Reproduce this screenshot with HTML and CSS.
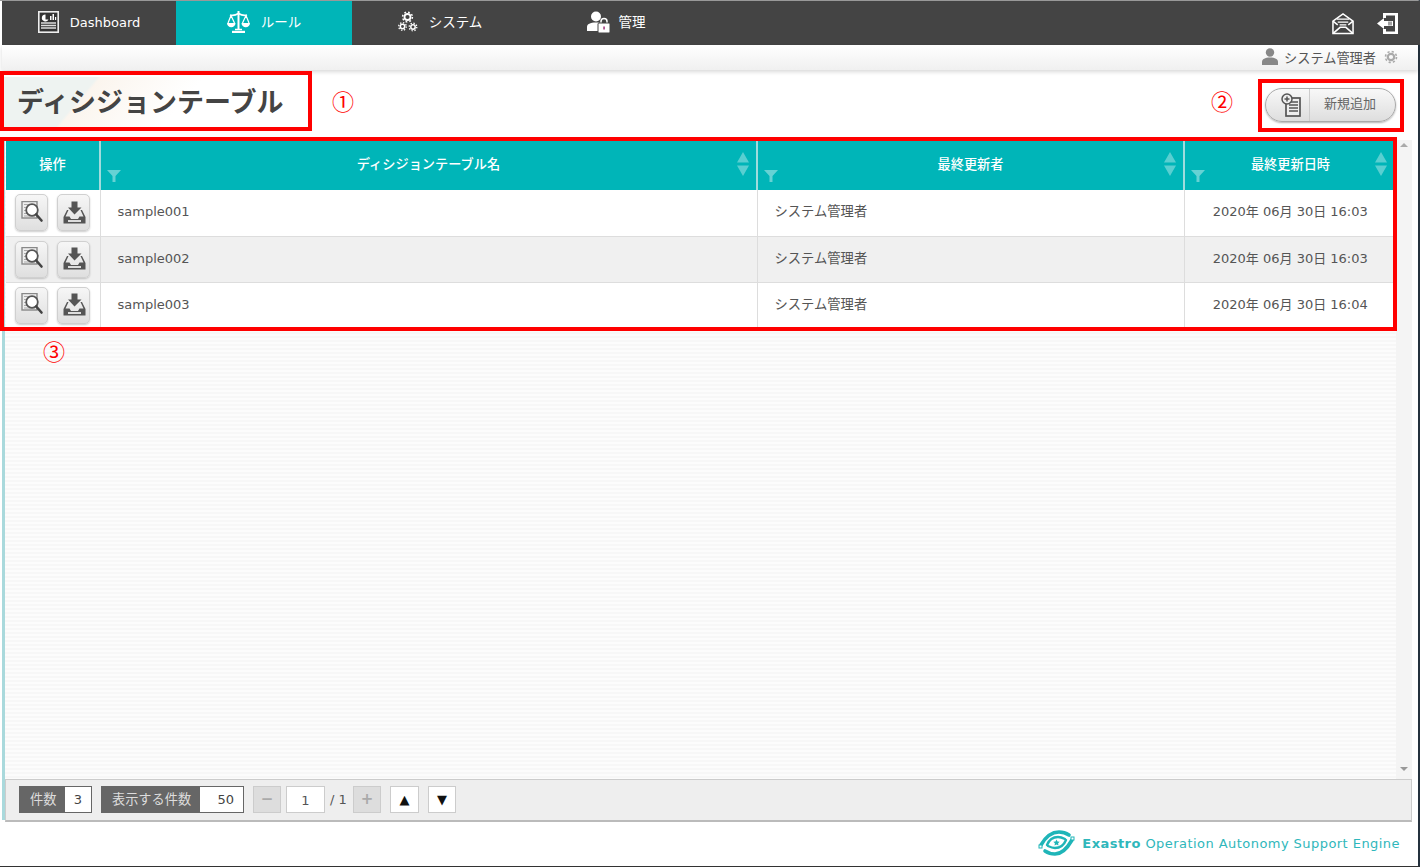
FILE: index.html
```html
<!DOCTYPE html>
<html lang="ja">
<head>
    <meta charset="UTF-8">
    <title>ディシジョンテーブル</title>
    <link rel="stylesheet" href="styles.css">
</head>
<body>

<svg class="defs" width="0" height="0">
    <symbol id="i-search" viewBox="0 0 24 24">
        <rect x="2" y="0.500" width="15" height="16.500" fill="#eee" stroke="#888" stroke-width="1.400"/>
        <path d="M4 3.500h11M4 6.500h3M4 9.500h2M4 12.500h3M4 15h11" stroke="#aaa" stroke-width="1"/>
        <circle cx="12" cy="9" r="5.800" fill="#fff" stroke="#555" stroke-width="1.800"/>
        <path d="M16.200 13.500l5.300 6" stroke="#444" stroke-width="2.600" stroke-linecap="round"/>
    </symbol>
    <symbol id="i-download" viewBox="0 -2 24 24">
        <path d="M9.500-1.500h6v6h4L12.500 11.500 6 4.500h3.500z" fill="#555"/>
        <path d="M5 7L1.500 14v6.500h22V14L20 7h-1.500l3 6.500h-4L16 16H9l-1.500-2.500h-4l3-6.500z" fill="#555"/>
        <rect x="6" y="17" width="13" height="2" fill="#ddd"/>
    </symbol>
    <symbol id="i-filter" viewBox="0 0 14 12">
        <path d="M0 0h14L8.500 6v6h-3V6z"/>
    </symbol>
    <symbol id="i-sort" viewBox="0 0 12 24">
        <path d="M6 0l6 10.500H0zM0 13.500h12L6 24z"/>
    </symbol>
</svg>

<div class="page">
    <nav class="nav">
        <a class="tab tab-first">
            <svg class="tab-icon" width="21" height="22" viewBox="0 0 21 22">
                <rect x="0.800" y="0.800" width="19.400" height="20.400" fill="#333" stroke="#eee" stroke-width="1.600"/>
                <path d="M7.500 3.500a3.500 3.500 0 1 0 3 5h-3z" fill="#fff"/>
                <path d="M12 9V5h1.500v4zM14.500 9V3H16v6zM17 9V6h1.200v3z" fill="#fff"/>
                <path d="M3 12h15M3 14.500h15M3 17h15" stroke="#ddd" stroke-width="1.300"/>
            </svg>
            Dashboard
        </a>
        <a class="tab tab-ja tab-active">
            <svg class="tab-icon" width="23" height="22" viewBox="0 0 23 22" fill="none" stroke="#fff">
                <path d="M11.500 0v18" stroke-width="2"/>
                <path d="M3 4c3 1 6 0 8.500-1.500C14 4 17 5 20 4" stroke-width="1.600"/>
                <path d="M5 21h13" stroke-width="2.400"/>
                <path d="M8 18.500h7" stroke-width="1.500"/>
                <path d="M4 4.500L1 12M4 4.500L7.500 12M19 4.500L15.500 12M19 4.500L22 12" stroke-width="1.200"/>
                <path d="M0 12h8.500a4.250 4.250 0 0 1-8.500 0zM14.500 12H23a4.250 4.250 0 0 1-8.500 0z" fill="#fff" stroke="none"/>
            </svg>
            ルール
        </a>
        <a class="tab tab-ja">
            <svg class="tab-icon" width="20" height="22" viewBox="0 0 20 22" fill="none" stroke="#fff">
                <circle cx="9.500" cy="6" r="3" stroke-width="1.800"/>
                <circle cx="9.500" cy="6" r="4.900" stroke-width="1.500" stroke-dasharray="1.800 2.050"/>
                <circle cx="4.500" cy="15.500" r="2.200" stroke-width="1.500"/>
                <circle cx="4.500" cy="15.500" r="3.800" stroke-width="1.300" stroke-dasharray="1.400 1.580"/>
                <circle cx="15" cy="16" r="2.200" stroke-width="1.500"/>
                <circle cx="15" cy="16" r="3.800" stroke-width="1.300" stroke-dasharray="1.400 1.580"/>
            </svg>
            システム
        </a>
        <a class="tab tab-ja tab-admin">
            <svg class="tab-icon" width="23" height="22" viewBox="0 0 23 22">
                <circle cx="9" cy="5.500" r="5" fill="#fff"/>
                <path d="M0 20v-4c0-3 3-4.500 9-4.500 3 0 5 .4 6 1.500v7z" fill="#fff"/>
                <path d="M14 13v-2.500a3 3 0 0 1 6 0V13" fill="none" stroke="#fff" stroke-width="1.500"/>
                <rect x="11" y="12" width="12" height="10" rx="1" fill="#fff" stroke="#444"/>
                <rect x="16.300" y="15.500" width="1.500" height="3" fill="#a0307a"/>
            </svg>
            管理
        </a>
        <div class="nav-right">
            <svg width="22" height="23" viewBox="0 0 23 23" fill="none" stroke="#fff" stroke-width="1.600">
                <path d="M1 9l10.500-7.500L22 9v13H1z"/>
                <path d="M1 9l5 4M22 9l-5 4M1.500 21.500l7-6h6l7 6"/>
                <path d="M5 7h13M6 10h11M8 13h7" stroke-width="1.300"/>
            </svg>
            <svg width="22" height="23" viewBox="0 0 22 23">
                <path d="M6 6V1h15v21H6v-5h3v2.500h9v-16H9V6z" fill="#fff"/>
                <path d="M0 11.500L7 6v3h9v5H7v3z" fill="#fff"/>
                <path d="M12 9.500v4M14 9.500v4" stroke="#444"/>
            </svg>
        </div>
    </nav>

    <div class="userbar">
        <svg width="16" height="18" viewBox="0 0 16 18" fill="#888">
            <circle cx="8" cy="4.500" r="4.200"/>
            <path d="M0 17v-3c0-3 3-4.500 8-4.500s8 1.500 8 4.500v3z"/>
        </svg>
        <span class="user-name">システム管理者</span>
        <svg width="14" height="14" viewBox="0 0 14 14" fill="none" stroke="#aaa">
            <circle cx="7" cy="7" r="3.200" stroke-width="2.200"/>
            <circle cx="7" cy="7" r="5.500" stroke-width="1.600" stroke-dasharray="2.200 2.120"/>
        </svg>
    </div>

    <div class="titlebar">
        <h1 class="title">ディシジョンテーブル</h1>
        <button class="add-btn" type="button">
            <span class="add-icon">
                <svg width="20" height="24" viewBox="0 0 20 24" fill="none" stroke="#555">
                    <rect x="5" y="5" width="14" height="18" fill="#eee" stroke-width="1.700"/>
                    <path d="M8 9h9M8 12h9M8 15h9M8 18h9" stroke-width="1.700"/>
                    <circle cx="6" cy="6" r="5" fill="#eee" stroke-width="1.500"/>
                    <path d="M6 3.500v5M3.500 6h5" stroke-width="1.500"/>
                </svg>
            </span>
            <span class="add-label">新規追加</span>
        </button>
    </div>

    <div class="content">
        <div class="table-wrap">
            <table class="rule-table">
                <thead>
                    <tr>
                        <th class="col-op">操作</th>
                        <th class="col-name">ディシジョンテーブル名
                            <svg class="filter"><use href="#i-filter"/></svg>
                            <svg class="sort"><use href="#i-sort"/></svg>
                        </th>
                        <th class="col-user">最終更新者
                            <svg class="filter"><use href="#i-filter"/></svg>
                            <svg class="sort"><use href="#i-sort"/></svg>
                        </th>
                        <th class="col-date">最終更新日時
                            <svg class="filter"><use href="#i-filter"/></svg>
                            <svg class="sort"><use href="#i-sort"/></svg>
                        </th>
                    </tr>
                </thead>
                <tbody>
                    <tr>
                        <td class="ops">
                            <button class="op-btn" type="button"><svg width="24" height="24"><use href="#i-search"/></svg></button>
                            <button class="op-btn" type="button"><svg width="24" height="24"><use href="#i-download"/></svg></button>
                        </td>
                        <td>sample001</td>
                        <td class="ja">システム管理者</td>
                        <td class="date">2020年 06月 30日 16:03</td>
                    </tr>
                    <tr>
                        <td class="ops">
                            <button class="op-btn" type="button"><svg width="24" height="24"><use href="#i-search"/></svg></button>
                            <button class="op-btn" type="button"><svg width="24" height="24"><use href="#i-download"/></svg></button>
                        </td>
                        <td>sample002</td>
                        <td class="ja">システム管理者</td>
                        <td class="date">2020年 06月 30日 16:03</td>
                    </tr>
                    <tr>
                        <td class="ops">
                            <button class="op-btn" type="button"><svg width="24" height="24"><use href="#i-search"/></svg></button>
                            <button class="op-btn" type="button"><svg width="24" height="24"><use href="#i-download"/></svg></button>
                        </td>
                        <td>sample003</td>
                        <td class="ja">システム管理者</td>
                        <td class="date">2020年 06月 30日 16:04</td>
                    </tr>
                </tbody>
            </table>
        </div>
        <div class="scrollbar">
            <span class="arrow-up"></span>
            <span class="arrow-down"></span>
        </div>
    </div>

    <div class="pager">
        <div class="count-box"><span class="count-label">件数</span><span class="count-value">3</span></div>
        <div class="count-box per-page"><span class="count-label">表示する件数</span><span class="count-value">50</span></div>
        <button class="page-btn page-step" type="button">−</button>
        <span class="page-input">1</span>
        <span class="page-total">/ 1</span>
        <button class="page-btn page-step" type="button">+</button>
        <button class="page-btn page-up" type="button">▲</button>
        <button class="page-btn" type="button">▼</button>
    </div>

    <footer class="footer">
        <svg width="37" height="26" viewBox="0 0 37 26" fill="none" stroke="#1fb5b8" stroke-linecap="round">
            <path d="M3 15C7 8 13 2 21 2c4 0 7 1 10 3" stroke-width="3.600"/>
            <path d="M34 10c-4 7-9 14-17 14-4 0-7-1-10-3" stroke-width="3.600"/>
            <path d="M9 15c2-5 6-8 11-8 3 0 5 1 7 2" stroke-width="2.400"/>
            <path d="M28 10c-2 5-6 8-11 8-3 0-5-1-7-2" stroke-width="2.400"/>
            <rect x="1" y="15" width="3" height="3" fill="#fff" stroke-width="1"/>
            <rect x="33" y="7" width="3" height="3" fill="#fff" stroke-width="1"/>
            <path d="M18.500 9.500l1 2 2.200.3-1.600 1.500.4 2.200-2-1-2 1 .4-2.200-1.600-1.500 2.200-.3z" fill="#1fb5b8" stroke="none"/>
        </svg>
        <span class="brand"><b>Exastro</b> Operation Autonomy Support Engine</span>
    </footer>

    <!-- 説明用の赤枠と番号 -->
    <div class="mark mark-title"></div>
    <div class="mark mark-add"></div>
    <div class="mark mark-table"></div>
    <span class="num num-1">①</span>
    <span class="num num-2">②</span>
    <span class="num num-3">③</span>
</div>

</body>
</html>
```

FILE: styles.css
```css
* {
    box-sizing: border-box;
}
body {
    margin: 0;
    background-color: #fff;
    font-family: "DejaVu Sans", "Noto Sans CJK JP", sans-serif;
    font-size: 13px;
    color: #555;
    overflow: hidden;
}
.defs {
    position: absolute;
}
.page {
    position: relative;
    display: flex;
    flex-direction: column;
    width: 1420px;
    height: 867px;
    padding-left: 2px;
    border-top: 1px solid #999;
    border-right: 2px solid #24313d;
    border-bottom: 1px solid #333;
}

/* nav */
.nav {
    display: flex;
    flex: none;
    height: 44px;
    margin-right: -2px;
    background-color: #444;
}
.tab {
    display: flex;
    align-items: center;
    justify-content: center;
    gap: 11px;
    width: 176px;
    padding-bottom: 2px;
    color: #fff;
}
.tab-first {
    width: 174px;
}
.tab-ja {
    font-size: 13.500px;
    line-height: 18px;
}
.tab-active {
    background-color: #00b5b8;
}
.tab-admin {
    gap: 9px;
}
.nav-right {
    display: flex;
    align-items: center;
    gap: 23px;
    margin-left: auto;
    padding-right: 21px;
}

/* user bar */
.userbar {
    display: flex;
    flex: none;
    align-items: center;
    justify-content: flex-end;
    height: 25px;
    padding: 0 20px 1px 0;
    background: linear-gradient(#fff, #f0f0f0);
    box-shadow: 0 2px 4px rgba(0, 0, 0, .15);
    color: #555;
    font-size: 13.200px;
    position: relative;
}
.user-name {
    margin: 0 8px 0 6px;
}

/* title */
.titlebar {
    display: flex;
    flex: none;
    align-items: center;
    justify-content: space-between;
    height: 70px;
    padding: 0 22px 3px 0;
}
.title {
    width: 306px;
    margin: 0;
    padding: 0 0 6px 15px;
    background: linear-gradient(130deg, #eef3f1 0, #eef3f1 73px, #fbf5ee 76px, #fff 155px);
    font-family: "Noto Sans CJK JP", sans-serif;
    font-size: 27px;
    line-height: 48px;
    color: #444;
    white-space: nowrap;
}
.add-btn {
    display: flex;
    align-items: center;
    width: 131px;
    height: 34px;
    margin-top: 3px;
    padding: 0;
    background: linear-gradient(#f8f8f8, #dedede);
    border: 1px solid #aaa;
    border-radius: 17px;
    box-shadow: 0 1px 2px rgba(0, 0, 0, .3);
    font: inherit;
    color: #666;
}
.add-icon {
    display: flex;
    align-items: center;
    justify-content: center;
    width: 44px;
    height: 100%;
    padding-left: 6px;
    border-right: 1px solid #ccc;
}
.add-label {
    flex: 1;
    padding: 0 5px 5px 0;
    font-size: 13px;
    text-align: center;
}

/* table */
.content {
    display: flex;
    flex: 1;
    min-height: 0;
    margin-right: 6px;
    border-left: 3px solid #a9d9dc;
}
.table-wrap {
    flex: 1;
    padding: 1px 0 0 1px;
    background: repeating-linear-gradient(#f7f7f7 0, #f7f7f7 2px, #fcfcfc 2px, #fcfcfc 4px);
}
.rule-table {
    width: 1390px;
    border-collapse: collapse;
    table-layout: fixed;
    background-color: #fff;
}
.col-op { width: 94px; }
.col-name { width: 657px; }
.col-user { width: 427px; }
.col-date { width: 212px; }
.rule-table th {
    position: relative;
    height: 49px;
    padding: 0 0 2px;
    background-color: #00b5b8;
    border-left: 2px solid #a0dcdd;
    color: #fff;
    font-size: 13.200px;
    line-height: 20px;
    font-weight: 500;
    text-align: center;
}
.rule-table th:first-child {
    border-left: 0;
}
.filter {
    position: absolute;
    left: 6px;
    bottom: 8px;
    width: 14px;
    height: 12px;
    fill: rgba(255, 255, 255, .4);
}
.sort {
    position: absolute;
    right: 7px;
    top: 11px;
    width: 12px;
    height: 24px;
    fill: rgba(255, 255, 255, .35);
}
.col-date .sort {
    right: 9px;
}
.rule-table td {
    height: 46px;
    padding: 0 0 1px 17px;
    border-left: 1px solid #ddd;
    border-bottom: 1px solid #ddd;
    line-height: 20px;
}
.rule-table td:first-child {
    border-left: 0;
}
.rule-table tbody tr:nth-child(even) {
    background-color: #f0f0f0;
}
.rule-table td.ja {
    font-size: 13.300px;
}
.rule-table td.date {
    padding-left: 0;
    text-align: center;
}
.rule-table td.ops {
    padding: 0 0 0 9px;
}
.op-btn {
    display: inline-flex;
    align-items: center;
    justify-content: center;
    width: 33px;
    height: 37px;
    margin: 0 5px 0 0;
    padding: 0;
    vertical-align: middle;
    background: linear-gradient(#f6f6f6, #dfdfdf);
    border: 1px solid #d0d0d0;
    border-radius: 5px;
    box-shadow: 0 1px 2px rgba(0, 0, 0, .2);
}

.scrollbar {
    display: flex;
    flex: none;
    flex-direction: column;
    justify-content: space-between;
    align-items: center;
    width: 16px;
    padding: 3px 0 8px;
    background-color: #f4f4f4;
}
.arrow-up,
.arrow-down {
    width: 0;
    height: 0;
    border-left: 4px solid transparent;
    border-right: 4px solid transparent;
}
.arrow-up {
    border-bottom: 4px solid #aaa;
}
.arrow-down {
    border-top: 4px solid #999;
}

/* pager */
.pager {
    display: flex;
    flex: none;
    align-items: center;
    height: 43px;
    margin-right: 6px;
    margin-left: 3px;
    padding: 0 0 2px 13px;
    background-color: #eee;
    border: 1px solid #ccc;
    border-bottom: 2px solid #bbb;
    position: relative;
}
.pager::before {
    content: "";
    position: absolute;
    left: -4px;
    top: -1px;
    bottom: 0;
    width: 3px;
    background-color: #a9d9dc;
}
.count-box {
    display: flex;
    height: 27px;
    width: 73px;
    border: 1px solid #666;
    background-color: #fff;
}
.per-page {
    width: 143px;
    margin-left: 9px;
}
.count-label {
    width: 45px;
    padding: 0 0 0 10px;
    background-color: #666;
    color: #ddd;
    font-size: 13.200px;
    line-height: 25px;
}
.per-page .count-label {
    width: 98px;
}
.count-value {
    flex: 1;
    padding-right: 9px;
    color: #444;
    line-height: 25px;
    text-align: right;
}
.page-btn {
    width: 28px;
    height: 27px;
    margin-left: 9px;
    padding: 0;
    background-color: #fff;
    border: 1px solid #ccc;
    font: inherit;
    color: #111;
}
.page-step {
    background-color: #ddd;
    color: #aaa;
    font-size: 15px;
    font-weight: bold;
}
.page-up {
    width: 29px;
}
.page-input {
    width: 39px;
    height: 27px;
    margin-left: 5px;
    background-color: #fff;
    border: 1px solid #ccc;
    line-height: 27px;
    text-align: center;
}
.page-total {
    width: 24px;
    margin-right: -5px;
    padding-left: 5px;
}

/* footer */
.footer {
    display: flex;
    flex: none;
    align-items: center;
    justify-content: flex-end;
    gap: 7px;
    height: 44px;
    padding: 0 18px 2px 0;
}
.brand {
    color: #2fb7bb;
    font-size: 13px;
    letter-spacing: .45px;
    white-space: nowrap;
}

/* annotations */
.mark {
    position: absolute;
    border: 4px solid #f00;
}
.mark-title {
    left: 0;
    top: 70px;
    width: 312px;
    height: 60px;
}
.mark-add {
    left: 1258px;
    top: 78px;
    width: 146px;
    height: 53px;
}
.mark-table {
    left: 0;
    top: 136px;
    width: 1397px;
    height: 194px;
}
.num {
    position: absolute;
    font-family: "Noto Sans CJK JP", sans-serif;
    font-size: 22px;
    line-height: 24px;
    color: #f00;
}
.num-1 { left: 332px; top: 87px; }
.num-2 { left: 1211px; top: 87px; }
.num-3 { left: 43px; top: 337px; }
```
